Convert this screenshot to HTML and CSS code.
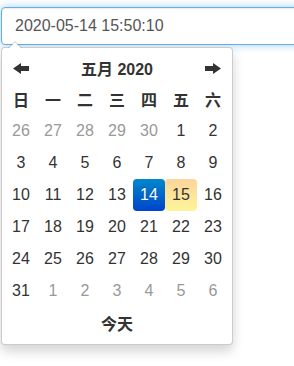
FILE: index.html
```html
<!DOCTYPE html>
<html lang="zh">
<head>
    <meta charset="UTF-8">
    <meta name="viewport" content="width=device-width, initial-scale=1.0">
    <title>日期时间选择</title>
    <link rel="stylesheet" href="styles.css">
</head>
<body>
<div class="picker-wrap">
    <div class="input-clip">
        <input class="form-control" type="text" value="2020-05-14 15:50:10">
    </div>

    <div class="datetimepicker">
        <table class="days">
            <colgroup>
                <col span="7" class="day-col">
            </colgroup>
            <thead>
                <tr class="nav">
                    <th class="prev">
                        <svg width="16" height="11" viewBox="0 0 16 11"><polygon points="0,5.5 8,0 8,3 16,3 16,8 8,8 8,11" fill="#333"/></svg>
                    </th>
                    <th class="switch" colspan="5">五月 2020</th>
                    <th class="next">
                        <svg width="16" height="11" viewBox="0 0 16 11"><polygon points="16,5.5 8,0 8,3 0,3 0,8 8,8 8,11" fill="#333"/></svg>
                    </th>
                </tr>
                <tr class="dow">
                    <th>日</th><th>一</th><th>二</th><th>三</th><th>四</th><th>五</th><th>六</th>
                </tr>
            </thead>
            <tbody id="day-rows"></tbody>
            <tfoot>
                <tr>
                    <th class="today-btn" colspan="7">今天</th>
                </tr>
            </tfoot>
        </table>
    </div>
</div>
<script>
    // May 2020 starts on a Friday, so the grid opens on Sunday 26 April
    let rowsHTML = '';
    let day = 26, month = -1;
    for(let r = 0; r < 6; r++) {
        rowsHTML += '<tr>';
        for(let c = 0; c < 7; c++) {
            let cls = 'day';
            if(month != 0) cls += ' old';
            if(month == 0 && day == 14) cls += ' active';
            if(month == 0 && day == 15) cls += ' today';
            rowsHTML += `<td class="${cls}">${day}</td>`;
            day++;
            if(month == -1 && day > 30) { day = 1; month = 0; }
            else if(month == 0 && day > 31) { day = 1; month = 1; }
        }
        rowsHTML += '</tr>';
    }
    document.getElementById('day-rows').innerHTML = rowsHTML;
</script>
</body>
</html>
```

FILE: styles.css
```css
html, body {
    height: 100%;
}

body {
    margin: 0;
    font-family: "Liberation Sans", Arial, "Noto Sans CJK SC", sans-serif;
    font-size: 16px;
    color: #333;
    background: #fff;
}

.picker-wrap {
    position: relative;
    width: 294px;
    height: 100%;
}

/* the field runs on past the right edge of the frame */
.input-clip {
    box-sizing: border-box;
    width: 294px;
    padding: 7px 0 10px 1px;
    overflow: hidden;
}

.form-control {
    display: block;
    box-sizing: border-box;
    width: 320px;
    height: 38px;
    padding: 6px 13px;
    font-family: inherit;
    font-size: 16px;
    color: #555;
    background: #fff;
    border: 1px solid #66afe9;
    border-radius: 4px;
    outline: 0;
    box-shadow: inset 0 1px 1px rgba(0, 0, 0, .075), 0 0 8px rgba(102, 175, 233, .6);
}

.datetimepicker {
    position: absolute;
    top: 47px;
    left: 1px;
    box-sizing: border-box;
    width: 232px;
    padding: 4px 3px 5px;
    background: #fff;
    border: 1px solid rgba(0, 0, 0, .2);
    border-radius: 4px;
    box-shadow: 0 6px 12px rgba(0, 0, 0, .175);
}

.datetimepicker:before {
    content: '';
    position: absolute;
    top: -7px;
    left: 6px;
    border-left: 7px solid transparent;
    border-right: 7px solid transparent;
    border-bottom: 7px solid rgba(0, 0, 0, .2);
}

.datetimepicker:after {
    content: '';
    position: absolute;
    top: -6px;
    left: 7px;
    border-left: 6px solid transparent;
    border-right: 6px solid transparent;
    border-bottom: 6px solid #fff;
}

.days {
    border-collapse: separate;
    border-spacing: 0;
    width: 224px;
}

.day-col {
    width: 32px;
}

.days th,
.days td {
    height: 32px;
    padding: 0;
    text-align: center;
    vertical-align: middle;
    border-radius: 4px;
}

.days th {
    font-weight: bold;
}

.nav th {
    height: 31px;
}

.prev svg,
.next svg {
    display: block;
    margin: 1px auto 0;
}

.day.old {
    color: #999;
}

.day.active {
    color: #fff;
    text-shadow: 0 -1px 0 rgba(0, 0, 0, .25);
    background-image: linear-gradient(to bottom, #08c, #04c);
}

.day.today {
    background-image: linear-gradient(to bottom, #fdd49a, #fdf59a);
}
```
